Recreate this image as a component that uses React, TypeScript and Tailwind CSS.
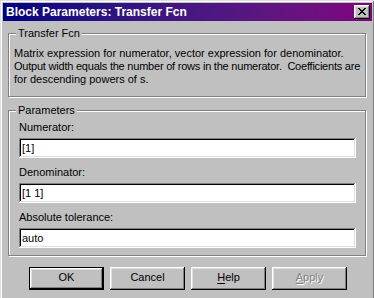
import React from "react";

const raised =
  "shadow-[inset_-1px_-1px_#000,inset_1px_1px_#fff,inset_-2px_-2px_#808080,inset_2px_2px_#dfdfdf]";
const sunken =
  "shadow-[inset_-1px_-1px_#fff,inset_1px_1px_#808080,inset_-2px_-2px_#dfdfdf,inset_2px_2px_#000]";
const etched = "border border-[#808080] shadow-[1px_1px_0_#fff,inset_1px_1px_0_#fff]";

function CloseGlyph() {
  const px = [
    "XX....XX",
    ".XX..XX.",
    "..XXXX..",
    "...XX...",
    "..XXXX..",
    ".XX..XX.",
    "XX....XX",
  ];
  const rects: React.ReactElement[] = [];
  px.forEach((row, y) =>
    row.split("").forEach((c, x) => {
      if (c === "X") rects.push(<rect key={`${x}-${y}`} x={x} y={y} width={1} height={1} fill="#000" />);
    })
  );
  return (
    <svg width="8" height="7" viewBox="0 0 8 7" shapeRendering="crispEdges">
      {rects}
    </svg>
  );
}

function Field({ label, value, first }: { label: string; value: string; first?: boolean }) {
  return (
    <div className={first ? "" : "mt-[7px]"}>
      <div className="h-[14px] leading-[14px] pl-[10px] whitespace-nowrap">{label}</div>
      <div className={`ml-[10px] mt-[4px] w-[337px] h-[20px] bg-white ${sunken} flex items-center pl-[3px] leading-[14px]`}>
        {value}
      </div>
    </div>
  );
}

function Btn({ children, isDefault }: { children: React.ReactNode; isDefault?: boolean }) {
  return (
    <div
      className={`w-[75px] h-[23px] bg-[#c0c0c0] ${isDefault ? "border border-black" : ""} flex`}
    >
      <div className={`flex-1 ${raised} flex items-center justify-center pb-[2px]`}>{children}</div>
    </div>
  );
}

export default function App() {
  return (
    <div
      className="w-[374px] h-[298px] overflow-hidden bg-[#c0c0c0] text-black text-[11px]"
      style={{ fontFamily: '"Liberation Sans", Arial, sans-serif' }}
    >
      <div className="w-[375px] h-[304px] bg-[#c0c0c0] pt-[3px] px-[3px] shadow-[inset_-1px_-1px_#000,inset_1px_1px_#dfdfdf,inset_-2px_-2px_#808080,inset_2px_2px_#fff]">
        {/* Title bar */}
        <div className="h-[18px] bg-gradient-to-r from-[#000080] to-[#800080] flex items-center pl-[3px] pr-[2px]">
          <div className="flex-1 text-white font-bold text-[12px] leading-[18px] whitespace-nowrap">
            Block Parameters: Transfer Fcn
          </div>
          <div className={`w-[16px] h-[14px] bg-[#c0c0c0] ${raised} flex items-start justify-start pl-[4px] pt-[3px]`}>
            <CloseGlyph />
          </div>
        </div>

        <div className="px-[5px]">
          {/* Group 1 */}
          <div className={`relative mt-[12px] w-[358px] h-[64px] ${etched} pt-[13px] pl-[5px]`}>
            <span className="absolute -top-[7px] left-[7px] px-[2px] bg-[#c0c0c0] leading-[13px] whitespace-nowrap">
              Transfer Fcn
            </span>
            <div className="leading-[13px] whitespace-pre">
              <div>Matrix expression for numerator, vector expression for denominator.</div>
              <div className="tracking-[-0.22px]">
                {"Output width equals the number of rows in the numerator.  Coefficients are"}
              </div>
              <div>for descending powers of s.</div>
            </div>
          </div>

          {/* Group 2 */}
          <div className={`relative mt-[13px] w-[358px] ${etched} pt-[9px] pb-[7px]`}>
            <span className="absolute -top-[7px] left-[7px] px-[2px] bg-[#c0c0c0] leading-[13px] whitespace-nowrap">
              Parameters
            </span>
            <Field label="Numerator:" value="[1]" first />
            <Field label="Denominator:" value="[1 1]" />
            <Field label="Absolute tolerance:" value="auto" />
          </div>

          {/* Buttons */}
          <div className="mt-[11px] ml-[21px] flex gap-[6px]">
            <Btn isDefault>OK</Btn>
            <Btn>Cancel</Btn>
            <Btn>
              <span>
                <span className="underline underline-offset-[2px]">H</span>elp
              </span>
            </Btn>
            <Btn>
              <span className="text-[#808080] [text-shadow:1px_1px_0_#fff]">
                <span className="underline underline-offset-[2px]">A</span>pply
              </span>
            </Btn>
          </div>
        </div>
      </div>
    </div>
  );
}
